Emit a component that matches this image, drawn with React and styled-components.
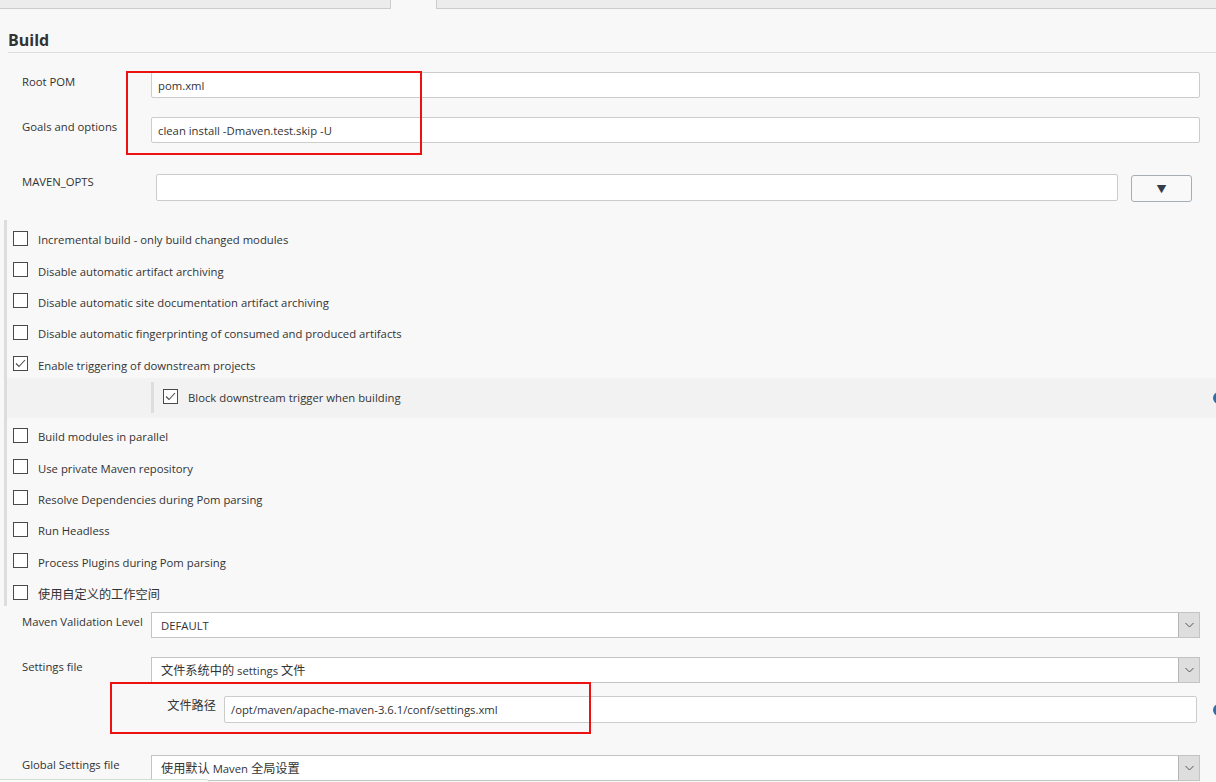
import React from "react";
import styled, { createGlobalStyle } from "styled-components";

const GlobalStyle = createGlobalStyle`
  html, body {
    margin: 0;
    padding: 0;
    background: #f8f8f8;
    overflow: hidden;
  }
  body {
    font-family: "Open Sans", "Noto Sans CJK SC", sans-serif;
    font-size: 11.3px;
    color: #333333;
  }
  * { box-sizing: border-box; }
`;

const Page = styled.div`
  position: relative;
  width: 1216px;
  height: 782px;
  overflow: hidden;
`;

const TabStrip = styled.div`
  display: flex;
  height: 9px;
  background: #ececec;
  border-bottom: 1px solid #cccccc;
`;

const Tab = styled.div`
  margin-left: 390px;
  width: 47px;
  height: 9px;
  background: #f8f8f8;
  border-left: 1px solid #cccccc;
  border-right: 1px solid #cccccc;
`;

const SectionTitle = styled.h2`
  margin: 21px 0 0 8px;
  padding-bottom: 2px;
  font-size: 16px;
  line-height: 20px;
  font-weight: 700;
  color: #333333;
  border-bottom: 1px solid #dddddd;
`;

const FieldRow = styled.div`
  display: grid;
  grid-template-columns: ${(p) => p.$labelWidth || 143}px 1fr;
  align-items: start;
  margin-top: ${(p) => p.$top}px;
  padding-left: 8px;
  padding-right: ${(p) => (p.$right != null ? p.$right : 16)}px;
`;

const Label = styled.div`
  padding-left: 14px;
  padding-top: ${(p) => (p.$flush ? 0 : 2)}px;
  line-height: 16px;
  white-space: nowrap;
`;

const Cjk = styled.span`
  font-size: 12.2px;
`;

const TextInput = styled.div`
  height: 26px;
  background: #ffffff;
  border: 1px solid #cccccc;
  border-radius: 2px;
  padding-left: 6px;
  line-height: 25px;
  white-space: nowrap;
`;

const OptsCell = styled.div`
  display: flex;
  align-items: flex-start;
  gap: 13px;
`;

const TextArea = styled.div`
  flex: 1;
  height: 27px;
  background: #ffffff;
  border: 1px solid #cccccc;
  border-radius: 2px;
`;

const ExpandButton = styled.div`
  width: 61px;
  height: 27px;
  margin-top: 1px;
  border: 1px solid #a5adb6;
  border-radius: 3px;
  background: #f9f9f9;
  display: flex;
  align-items: center;
  justify-content: center;
  font-size: 10px;
  color: #333c48;
`;

const OptionGroup = styled.div`
  margin: 18px 0 0 4px;
  padding-top: 4px;
  border-left: 3px solid #dddddd;
  height: 386px;
`;

const CheckRow = styled.label`
  display: flex;
  align-items: center;
  height: 31.4px;
  padding-left: 6px;
  gap: 10px;
`;

const Box = styled.span`
  width: 15px;
  height: 15px;
  margin-top: -3px;
  border: 1px solid #4a4a4a;
  background: #ffffff;
  display: flex;
  align-items: center;
  justify-content: center;
  flex-shrink: 0;
`;

const NestedBlock = styled.div`
  display: flex;
  align-items: center;
  height: 40px;
  margin: -3px 0 3px;
  background: #f2f2f2;
`;

const NestedBody = styled.div`
  display: flex;
  align-items: center;
  gap: 10px;
  height: 31px;
  margin-left: 144px;
  padding-left: 9px;
  border-left: 3px solid #dddddd;
`;

const HelpDot = styled.span`
  width: 12px;
  height: 12px;
  border-radius: 50%;
  background: #2b6ea8;
  margin-left: auto;
  margin-right: -9px;
  flex-shrink: 0;
`;

const Select = styled.div`
  display: flex;
  height: 26px;
  background: #ffffff;
  border: 1px solid #c4c4c4;
`;

const SelectText = styled.div`
  flex: 1;
  padding-left: 9px;
  line-height: 26px;
  white-space: nowrap;
`;

const SelectArrow = styled.div`
  width: 21px;
  background: #dedede;
  border-left: 1px solid #b5b5b5;
  display: flex;
  align-items: center;
  justify-content: center;
`;

const SubRow = styled.div`
  display: flex;
  align-items: flex-start;
  gap: 8px;
`;

const SubLabel = styled.div`
  width: 65px;
  text-align: right;
  padding-top: 2px;
  line-height: 16px;
`;

const SubInput = styled(TextInput)`
  flex: 1;
  height: 27px;
  line-height: 26px;
`;

const SubHelp = styled(HelpDot)`
  margin: 8px -9px 0 8px;
`;

const Highlight = styled.div`
  position: absolute;
  left: ${(p) => p.$x}px;
  top: ${(p) => p.$y}px;
  width: ${(p) => p.$w}px;
  height: ${(p) => p.$h}px;
  border: 2px solid #ee1111;
  pointer-events: none;
`;

const StatusEdge = styled.div`
  position: absolute;
  left: -4px;
  top: 779px;
  width: 214px;
  height: 10px;
  border: 1px solid #cfe0cf;
  border-radius: 4px;
  background: #fafdfa;
`;

const Check = () => (
  <svg width="13" height="13" viewBox="0 0 13 13">
    <path d="M2 6.5 L5 9.5 L11 3" fill="none" stroke="#4a4a4a" strokeWidth="1.1" />
  </svg>
);

const Chevron = () => (
  <svg width="9" height="6" viewBox="0 0 9 6">
    <path d="M0.5 1 L4.5 5 L8.5 1" fill="none" stroke="#555" strokeWidth="1" />
  </svg>
);

const Checkbox = ({ checked, children }) => (
  <CheckRow>
    <Box>{checked && <Check />}</Box>
    <span>{children}</span>
  </CheckRow>
);

const Dropdown = ({ children }) => (
  <Select>
    <SelectText>{children}</SelectText>
    <SelectArrow>
      <Chevron />
    </SelectArrow>
  </Select>
);

const firstOptions = [
  "Incremental build - only build changed modules",
  "Disable automatic artifact archiving",
  "Disable automatic site documentation artifact archiving",
  "Disable automatic fingerprinting of consumed and produced artifacts",
];

const laterOptions = [
  "Build modules in parallel",
  "Use private Maven repository",
  "Resolve Dependencies during Pom parsing",
  "Run Headless",
  "Process Plugins during Pom parsing",
];

export default function App() {
  return (
    <Page>
      <GlobalStyle />
      <TabStrip>
        <Tab />
      </TabStrip>
      <SectionTitle>Build</SectionTitle>

      <FieldRow $top={19}>
        <Label>Root POM</Label>
        <TextInput>pom.xml</TextInput>
      </FieldRow>
      <FieldRow $top={19}>
        <Label>Goals and options</Label>
        <TextInput>clean install -Dmaven.test.skip -U</TextInput>
      </FieldRow>
      <FieldRow $top={31} $labelWidth={148} $right={24}>
        <Label $flush>MAVEN_OPTS</Label>
        <OptsCell>
          <TextArea />
          <ExpandButton>▼</ExpandButton>
        </OptsCell>
      </FieldRow>

      <OptionGroup>
        {firstOptions.map((o) => (
          <Checkbox key={o}>{o}</Checkbox>
        ))}
        <Checkbox checked>Enable triggering of downstream projects</Checkbox>
        <NestedBlock>
          <NestedBody>
            <Box>
              <Check />
            </Box>
            <span>Block downstream trigger when building</span>
          </NestedBody>
          <HelpDot />
        </NestedBlock>
        {laterOptions.map((o) => (
          <Checkbox key={o}>{o}</Checkbox>
        ))}
        <Checkbox>
          <Cjk>使用自定义的工作空间</Cjk>
        </Checkbox>
      </OptionGroup>

      <FieldRow $top={6}>
        <Label>Maven Validation Level</Label>
        <Dropdown>DEFAULT</Dropdown>
      </FieldRow>
      <FieldRow $top={19}>
        <Label>Settings file</Label>
        <Dropdown>
          <Cjk>文件系统中的</Cjk> settings <Cjk>文件</Cjk>
        </Dropdown>
      </FieldRow>
      <FieldRow $top={13} $right={0}>
        <span />
        <SubRow>
          <SubLabel>
            <Cjk>文件路径</Cjk>
          </SubLabel>
          <SubInput>/opt/maven/apache-maven-3.6.1/conf/settings.xml</SubInput>
          <SubHelp />
        </SubRow>
      </FieldRow>
      <FieldRow $top={32}>
        <Label>Global Settings file</Label>
        <Dropdown>
          <Cjk>使用默认</Cjk> Maven <Cjk>全局设置</Cjk>
        </Dropdown>
      </FieldRow>

      <Highlight $x={126} $y={71} $w={296} $h={84} />
      <Highlight $x={110} $y={682} $w={481} $h={52} />
      <StatusEdge />
    </Page>
  );
}
